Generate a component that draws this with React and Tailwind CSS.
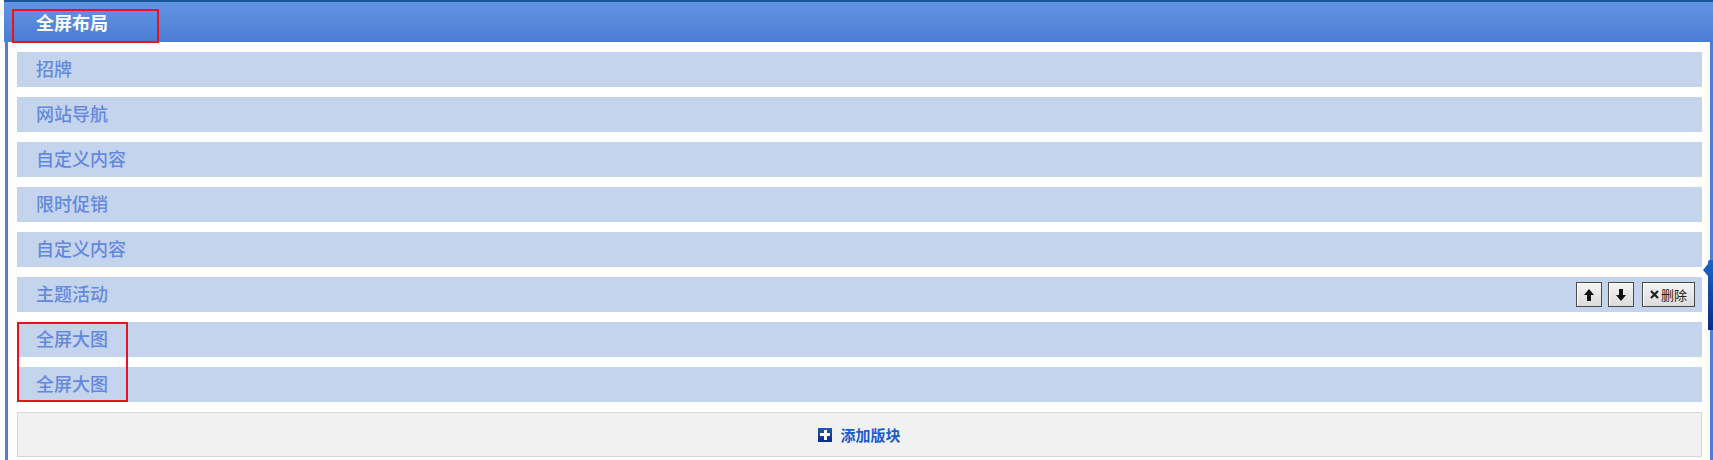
import React from "react";

const rows = ["招牌", "网站导航", "自定义内容", "限时促销", "自定义内容", "主题活动", "全屏大图", "全屏大图"];

function Arrow({ down }) {
  return (
    <svg width="10" height="12" viewBox="0 0 10 12" className={down ? "rotate-180" : ""}>
      <polygon points="5,0 10,6 7,6 7,12 3,12 3,6 0,6" fill="#111" />
    </svg>
  );
}

function Btn({ children, w }) {
  return (
    <div
      className={`${w} h-[25px] flex items-center justify-center border border-[#4a4a4a] bg-gradient-to-b from-[#f4f4f4] to-[#dcdcdc] shadow-[inset_1px_1px_0_#fff]`}
    >
      {children}
    </div>
  );
}

export default function App() {
  return (
    <div
      className="relative w-[1713px] h-[460px] bg-white overflow-hidden"
      style={{ fontFamily: '"Microsoft YaHei", "Noto Sans CJK SC", "Noto Sans", sans-serif' }}
    >
      <div className="ml-[4px] h-[42px] border-t-2 border-[#1b5496] bg-gradient-to-b from-[#6394e2] to-[#4d7cd5] flex items-center pl-[32px] pb-[1px]">
        <span className="text-white font-bold text-[18px] leading-none">全屏布局</span>
      </div>
      <div className="ml-[5px] border-l-[3px] border-r-[3px] border-[#4f7dd6] pl-[9px] pr-[8px] pt-[10px] pb-[3px] flex flex-col gap-[10px]">
        {rows.map((r, i) => (
          <div key={i} className="h-[35px] bg-[#c4d4ec] flex items-center pl-[19px] pr-[7px]">
            <span className="text-[18px] leading-none font-medium text-[#6489dc] pb-[3px]">{r}</span>
            {i === 5 && (
              <div className="ml-auto flex items-center">
                <Btn w="w-[26px]"><Arrow /></Btn>
                <div className="w-[6px]" />
                <Btn w="w-[26px]"><Arrow down /></Btn>
                <div className="w-[8px]" />
                <Btn w="w-[53px]">
                  <span className="text-[13px] leading-none text-[#222] flex items-center">
                    <svg width="9" height="9" viewBox="0 0 9 9" className="mr-[2px]">
                      <path d="M1 1 L8 8 M8 1 L1 8" stroke="#222" strokeWidth="2.2" />
                    </svg>
                    删除
                  </span>
                </Btn>
              </div>
            )}
          </div>
        ))}
        <div className="h-[45px] bg-[#f1f1f1] border border-[#d6d6d6] flex items-center justify-center gap-[8px]">
          <div className="w-[14px] h-[14px] bg-gradient-to-b from-[#2257b4] to-[#0b2c86] relative flex items-center justify-center">
            <div className="absolute w-[10px] h-[3px] bg-white" />
            <div className="absolute w-[3px] h-[10px] bg-white" />
          </div>
          <span className="text-[15px] font-bold text-[#1e5cc8] leading-none pb-[1px]">添加版块</span>
        </div>
      </div>

      {/* annotation boxes */}
      <div className="absolute left-[12px] top-[9px] w-[147px] h-[34px] border-2 border-[#e8141c]" />
      <div className="absolute left-[17px] top-[322px] w-[111px] h-[80px] border-2 border-[#e8141c]" />

      {/* side tab */}
      <div className="absolute left-[1708px] top-[260px] w-[5px] h-[70px] bg-gradient-to-b from-[#1d63c4] to-[#0a2c8c] rounded-tl-[2px]" />
      <div className="absolute left-[1703px] top-[264px] w-0 h-0 border-y-[6px] border-y-transparent border-r-[5px] border-r-[#1a5cc0]" />
    </div>
  );
}
